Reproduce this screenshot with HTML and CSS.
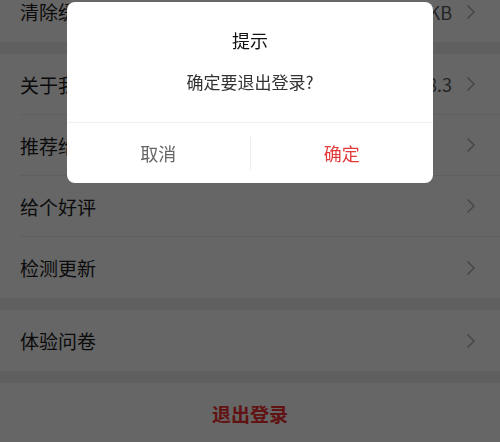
FILE: index.html
```html
<!DOCTYPE html>
<html lang="zh-CN">
<head>
<meta charset="utf-8">
<title>设置</title>
<link rel="stylesheet" href="styles.css">
</head>
<body>
<div class="page">
  <div class="list">
    <div class="group first">
      <div class="row"><span class="label">清除缓存</span><span class="value">12.5KB</span><svg class="chev" viewBox="0 0 10 16"><path d="M1.5 1.5 L8 8 L1.5 14.5"/></svg></div>
    </div>
    <div class="group">
      <div class="row"><span class="label">关于我们</span><span class="value">v2.8.3</span><svg class="chev" viewBox="0 0 10 16"><path d="M1.5 1.5 L8 8 L1.5 14.5"/></svg></div>
      <div class="row"><span class="label">推荐给好友</span><span class="value"></span><svg class="chev" viewBox="0 0 10 16"><path d="M1.5 1.5 L8 8 L1.5 14.5"/></svg></div>
      <div class="row"><span class="label">给个好评</span><span class="value"></span><svg class="chev" viewBox="0 0 10 16"><path d="M1.5 1.5 L8 8 L1.5 14.5"/></svg></div>
      <div class="row"><span class="label">检测更新</span><span class="value"></span><svg class="chev" viewBox="0 0 10 16"><path d="M1.5 1.5 L8 8 L1.5 14.5"/></svg></div>
    </div>
    <div class="group">
      <div class="row"><span class="label">体验问卷</span><span class="value"></span><svg class="chev" viewBox="0 0 10 16"><path d="M1.5 1.5 L8 8 L1.5 14.5"/></svg></div>
    </div>
    <div class="group">
      <div class="logout">退出登录</div>
    </div>
  </div>
</div>
<div class="mask">
  <div class="dialog">
    <div class="dialog-title">提示</div>
    <div class="dialog-msg">确定要退出登录?</div>
    <div class="dialog-btns">
      <div class="btn cancel">取消</div>
      <div class="btn-sep"></div>
      <div class="btn ok">确定</div>
    </div>
  </div>
</div>
</body>
</html>
```
FILE: styles.css
```css
* { box-sizing: border-box; }
html, body {
  margin: 0;
  padding: 0;
  width: 500px;
  height: 442px;
  overflow: hidden;
  background: #eeeeee;
  font-family: "Noto Sans CJK SC", "Noto Sans", sans-serif;
}
.page { width: 500px; height: 442px; overflow: hidden; }
.list {
  display: flex;
  flex-direction: column;
  gap: 12px;
  margin-top: -19px;
}
.group { background: #fff; }
.row {
  height: 61px;
  margin-left: 20px;
  padding-right: 24px;
  display: flex;
  align-items: center;
  border-bottom: 1px solid #eeeeee;
}
.row:last-child { border-bottom: none; }
.label {
  flex: 1;
  font-size: 19px;
  line-height: 1;
  color: #1c1c1c;
}
.value {
  font-size: 18px;
  line-height: 1;
  color: #5a5a5a;
  margin-right: 14px;
}
.chev {
  width: 10px;
  height: 16px;
  fill: none;
  stroke: #b0b0b0;
  stroke-width: 1.5;
}
.logout {
  height: 60px;
  display: flex;
  align-items: center;
  justify-content: center;
  font-size: 19px;
  font-weight: bold;
  color: #f23030;
}
.mask {
  position: fixed;
  inset: 0;
  background: rgba(0, 0, 0, 0.6);
  display: flex;
  justify-content: center;
  align-items: flex-start;
  padding-top: 2px;
}
.dialog {
  width: 366px;
  background: #fff;
  border-radius: 8px;
  overflow: hidden;
}
.dialog-title {
  margin-top: 25px;
  text-align: center;
  font-size: 18px;
  line-height: 26px;
  color: #111;
}
.dialog-msg {
  margin-top: 17px;
  padding-bottom: 28px;
  text-align: center;
  font-size: 17px;
  line-height: 24px;
  color: #333;
}
.dialog-btns {
  height: 61px;
  border-top: 1px solid #f0f0f0;
  display: flex;
  align-items: center;
}
.btn {
  flex: 1;
  text-align: center;
  font-size: 18px;
  line-height: 26px;
}
.cancel { color: #666; }
.ok { color: #e33b3b; }
.btn-sep {
  width: 1px;
  height: 33px;
  background: #eeeeee;
}
```
